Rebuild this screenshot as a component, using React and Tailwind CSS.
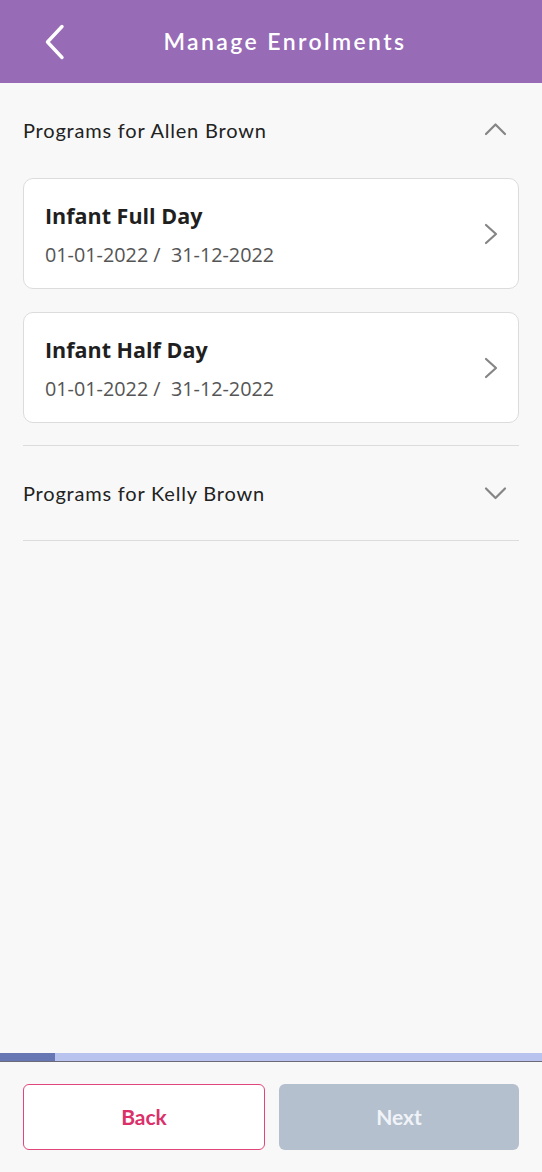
const programs = [
  { id: 1, name: 'Infant Full Day', start: '01-01-2022', end: '31-12-2022' },
  { id: 2, name: 'Infant Half Day', start: '01-01-2022', end: '31-12-2022' },
]

// シェブロン（向き指定）
const Chevron = ({ dir }) => {
  if (dir === 'right') {
    return (
      <svg width="14" height="22" viewBox="0 0 14 22" fill="none">
        <polyline points="2,2 12,11 2,20" stroke="#858585" strokeWidth="2.2" strokeLinecap="round" strokeLinejoin="round" />
      </svg>
    )
  }
  const points = dir === 'up' ? '2,12 11.5,2.5 21,12' : '2,2.5 11.5,12 21,2.5'
  return (
    <svg width="23" height="15" viewBox="0 0 23 15" fill="none">
      <polyline points={points} stroke="#858585" strokeWidth="2.2" strokeLinecap="round" strokeLinejoin="round" />
    </svg>
  )
}

const ProgramCard = ({ program }) => (
  <div className="flex items-center justify-between bg-white border border-[#dcdcdc] rounded-[10px] h-[111px] pl-[21px] pr-[20px]">
    <div className="flex flex-col">
      <div className="text-[21.5px] font-bold text-[#1f1f1f] leading-[28px] font-['Open_Sans',sans-serif] mt-[2px]">
        {program.name}
      </div>
      <div className="mt-[12px] text-[19.8px] text-[#555] leading-[26px] font-['Open_Sans',sans-serif]">
        {program.start} /&nbsp; {program.end}
      </div>
    </div>
    <Chevron dir="right" />
  </div>
)

const App = () => {
  return (
    <div className="w-[542px] h-[1172px] flex flex-col bg-[#f8f8f8] font-['Lato',sans-serif]">
      {/* ヘッダー */}
      <div className="h-[83px] bg-[#976bb5] flex items-center relative shrink-0">
        <svg className="absolute left-[44px] top-[24px]" width="22" height="36" viewBox="0 0 22 36" fill="none">
          <polyline points="18,2.5 3.5,18 18,33.5" stroke="white" strokeWidth="3.4" strokeLinecap="round" strokeLinejoin="round" />
        </svg>
        <div className="w-full text-center text-white text-[23px] font-semibold tracking-[2.4px] pl-[28px]">
          Manage Enrolments
        </div>
      </div>

      {/* 本文 */}
      <div className="flex-1 px-[23px]">
        <div className="flex items-center justify-between h-[95px] pb-[2px]">
          <span className="text-[20px] tracking-[0.8px] text-[#222]">Programs for Allen Brown</span>
          <span className="mr-[12px]">
            <Chevron dir="up" />
          </span>
        </div>
        <div className="flex flex-col gap-[23px]">
          {programs.map(p => (
            <ProgramCard key={p.id} program={p} />
          ))}
        </div>
        <div className="mt-[22px] border-t border-[#dcdcdc]" />
        <div className="flex items-center justify-between h-[94px]">
          <span className="text-[20px] tracking-[0.8px] text-[#222]">Programs for Kelly Brown</span>
          <span className="mr-[12px]">
            <Chevron dir="down" />
          </span>
        </div>
        <div className="border-t border-[#dcdcdc]" />
      </div>

      {/* 進捗バー */}
      <div className="h-[9px] bg-[#b8c4ee] flex shrink-0 border-b border-[#6b6b7a]">
        <div className="w-[55px] bg-[#6677b3]" />
      </div>

      {/* フッター */}
      <div className="h-[110px] flex gap-[14px] px-[23px] pt-[22px] shrink-0">
        <button className="flex-1 h-[66px] bg-white border-[1.5px] border-[#e0457b] rounded-[6px] text-[#db3069] text-[21px] font-bold">
          Back
        </button>
        <button className="flex-1 h-[66px] bg-[#b4c0ce] rounded-[6px] text-[#f0f3f7] text-[21px] font-bold">
          Next
        </button>
      </div>
    </div>
  )
}

export default App
